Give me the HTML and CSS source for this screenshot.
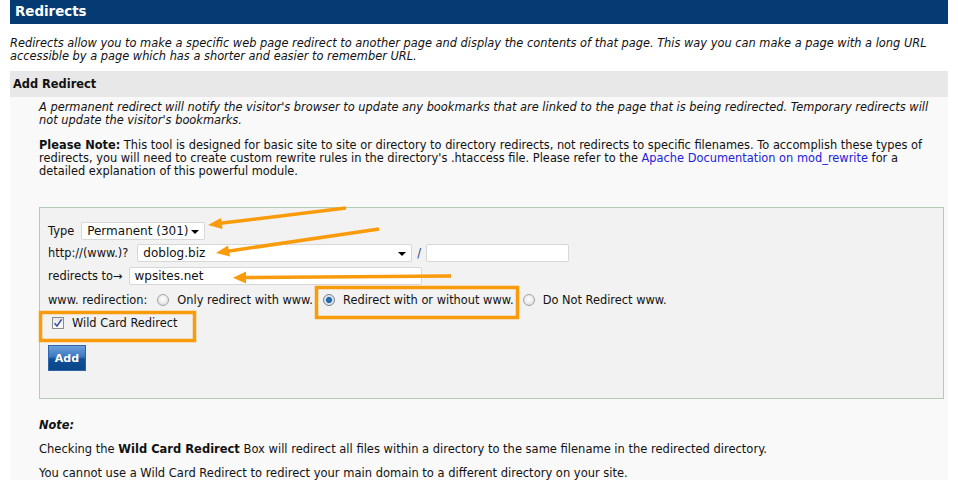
FILE: index.html
```html
<!DOCTYPE html>
<html>
<head>
<meta charset="utf-8">
<link rel="stylesheet" href="styles.css">
</head>
<body>
<div class="page">
  <div class="title-bar">Redirects</div>
  <p class="intro">Redirects allow you to make a specific web page redirect to another page and display the contents of that page. This way you can make a page with a long URL<br>accessible by a page which has a shorter and easier to remember URL.</p>
  <div class="section-head">Add Redirect</div>
  <div class="section-body">
    <p class="explain">A permanent redirect will notify the visitor's browser to update any bookmarks that are linked to the page that is being redirected. Temporary redirects will<br>not update the visitor's bookmarks.</p>
    <p class="please"><b>Please Note:</b> This tool is designed for basic site to site or directory to directory redirects, not redirects to specific filenames. To accomplish these types of<br>redirects, you will need to create custom rewrite rules in the directory's .htaccess file. Please refer to the <a class="link" href="#">Apache Documentation on mod_rewrite</a> for a<br>detailed explanation of this powerful module.</p>

    <div class="form-box">
      <div class="row row-type">
        <span class="label">Type</span>
        <span class="select sel-type"><span class="val">Permanent (301)</span><span class="caret"></span></span>
      </div>
      <div class="row row-http">
        <span class="label">http://(www.)?</span>
        <span class="select sel-domain"><span class="val">doblog.biz</span><span class="caret"></span></span>
        <span class="slash">/</span>
        <span class="input in-path"></span>
      </div>
      <div class="row row-to">
        <span class="label">redirects to→</span>
        <span class="input in-to"><span class="val">wpsites.net</span></span>
      </div>
      <div class="row row-www">
        <span class="label">www. redirection:</span>
        <span class="radio r1"></span><span class="rlabel">Only redirect with www.</span>
        <span class="radio on r2"></span><span class="rlabel">Redirect with or without www.</span>
        <span class="radio r3"></span><span class="rlabel">Do Not Redirect www.</span>
      </div>
      <div class="row row-wild">
        <span class="check"><svg width="10" height="10" viewBox="0 0 10 10"><path d="M1.5 5.2 L4 8 L8.6 1.4" fill="none" stroke="#3d4fa8" stroke-width="1.6"/></svg></span>
        <span class="clabel">Wild Card Redirect</span>
      </div>
      <div class="row row-btn">
        <span class="btn">Add</span>
      </div>
    </div>

    <p class="note-title">Note:</p>
    <p class="note">Checking the <b>Wild Card Redirect</b> Box will redirect all files within a directory to the same filename in the redirected directory.</p>
    <p class="note">You cannot use a Wild Card Redirect to redirect your main domain to a different directory on your site.</p>
  </div>

  <svg class="annot" width="958" height="480" viewBox="0 0 958 480">
    <g stroke="#fa9b0b" stroke-width="3.5" fill="none" stroke-linecap="butt">
      <line x1="346" y1="208" x2="218" y2="223.5"/>
      <line x1="379" y1="229" x2="226" y2="251.5"/>
      <line x1="451" y1="276" x2="243" y2="277.5"/>
      <rect x="40.5" y="312.5" width="154" height="28" stroke-width="3.5"/>
      <rect x="316.5" y="287.5" width="201" height="30" stroke-width="3.5"/>
    </g>
    <g fill="#fa9b0b">
      <polygon points="208,225 221,218 222.5,229"/>
      <polygon points="216,253 228,245.5 230,256.5"/>
      <polygon points="233,277.8 246,271.5 246,283.5"/>
    </g>
  </svg>
</div>
</body>
</html>
```

FILE: styles.css
```css
html, body {
  margin: 0;
  padding: 0;
  background: #ffffff;
}
body {
  font-family: "DejaVu Sans", Verdana, sans-serif;
  font-size: 11.2px;
  line-height: 13px;
  color: #111111;
}
.page {
  position: relative;
  width: 958px;
  height: 480px;
  overflow: hidden;
}
.title-bar {
  margin-left: 10px;
  width: 933px;
  height: 24px;
  padding-left: 5px;
  background: #043b72;
  color: #ffffff;
  font-weight: bold;
  font-size: 13.4px;
  line-height: 24px;
}
.intro {
  margin: 13px 0 0 10px;
  width: 935px;
  font-style: italic;
  font-size: 11.4px;
  white-space: nowrap;
}
.section-head {
  margin: 8px 0 0 10px;
  width: 935px;
  height: 26px;
  padding-left: 3px;
  background: #e8e8e8;
  font-weight: bold;
  font-size: 11.4px;
  line-height: 26px;
}
.section-body {
  margin-left: 10px;
  width: 938px;
  height: 400px;
  background: #f9f9f9;
  padding: 4px 0 0 29px;
  box-sizing: border-box;
}
.explain {
  margin: 0;
  width: 905px;
  font-style: italic;
  font-size: 11.4px;
  white-space: nowrap;
}
.please {
  margin: 12px 0 0 0;
  width: 905px;
  font-size: 11.4px;
  white-space: nowrap;
}
.link {
  color: #2222dd;
  text-decoration: none;
}
.form-box {
  margin-top: 29px;
  width: 905px;
  height: 192px;
  box-sizing: border-box;
  background: #f2f2f2;
  border: 1px solid #b3ccb8;
  padding: 14px 0 0 8px;
  font-size: 11.4px;
}
.row {
  display: flex;
  align-items: center;
}
.row-type { height: 18px; }
.row-http { height: 18px; margin-top: 4px; }
.row-to { height: 18px; margin-top: 5px; }
.row-www { height: 16px; margin-top: 7px; }
.row-wild { height: 16px; margin-top: 7px; }
.row-btn { height: 26px; margin-top: 14px; }

.label { margin-right: 4px; }
.select, .input {
  position: relative;
  display: flex;
  align-items: center;
  height: 18px;
  box-sizing: border-box;
  background: #ffffff;
  border: 1px solid #d7d7d7;
  border-radius: 2px;
  font-size: 12px;
  padding-left: 5px;
}
.sel-type { width: 124px; margin-left: 3px; }
.sel-domain { width: 275px; margin-left: 5px; }
.in-path { width: 143px; }
.in-to { width: 293px; margin-left: 2px; }
.caret {
  position: absolute;
  right: 5px;
  top: 7px;
  width: 0;
  height: 0;
  border-left: 4px solid transparent;
  border-right: 4px solid transparent;
  border-top: 4px solid #000000;
}
.slash {
  margin: 0 5px 0 5px;
  color: #2a3f8f;
}
.radio {
  width: 12px;
  height: 12px;
  box-sizing: border-box;
  border-radius: 50%;
  border: 1px solid #a4a4a4;
  background: radial-gradient(circle at 50% 40%, #ffffff 0, #e8e8e8 60%, #d0d0d0 100%);
}
.radio.on {
  background: radial-gradient(circle, #2a7fc7 0, #1a5fa0 2.5px, #cfe0ef 3.5px, #f2f2f2 100%);
  border-color: #7e7e7e;
}
.r1 { margin-left: 6px; }
.r2 { margin-left: 10px; }
.r3 { margin-left: 9px; }
.rlabel { margin-left: 8px; }
.check {
  display: flex;
  align-items: center;
  justify-content: center;
  width: 12px;
  height: 12px;
  box-sizing: border-box;
  margin-left: 4px;
  border: 1px solid #8c8c8c;
  background: linear-gradient(#e6e6e6, #ffffff);
}
.clabel { margin-left: 8px; }
.btn {
  display: flex;
  align-items: center;
  justify-content: center;
  width: 38px;
  height: 26px;
  box-sizing: border-box;
  border: 1px solid #2d64a8;
  background: linear-gradient(#6b9fdc 0, #3c78c0 45%, #0e4f97 55%, #0b4788 100%);
  color: #ffffff;
  font-weight: bold;
  font-size: 11px;
}
.note-title {
  margin: 20px 0 0 0;
  font-weight: bold;
  font-style: italic;
  font-size: 11.4px;
}
.note {
  margin: 11px 0 0 0;
  font-size: 11.5px;
}
.annot {
  position: absolute;
  left: 0;
  top: 0;
  pointer-events: none;
}
```
